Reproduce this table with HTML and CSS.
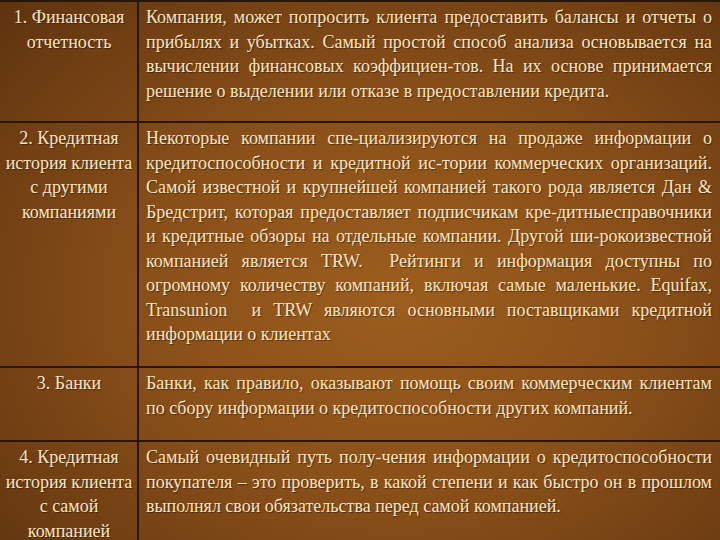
FILE: index.html
```html
<!DOCTYPE html>
<html lang="ru">
<head>
<meta charset="utf-8">
<link rel="stylesheet" href="styles.css">
</head>
<body>
<table class="grid">
  <tr class="r1">
    <td class="head"><div>1. Финансовая</div><div>отчетность</div></td>
    <td class="body">
      <div class="j">Компания, может попросить клиента предоставить балансы и отчеты о</div>
      <div class="j">прибылях и убытках. Самый простой способ анализа основывается на</div>
      <div class="j">вычислении финансовых коэффициен-тов. На их основе принимается</div>
      <div>решение о выделении или отказе в предоставлении кредита.</div>
    </td>
  </tr>
  <tr class="r2">
    <td class="head"><div>2. Кредитная</div><div>история клиента</div><div>с другими</div><div>компаниями</div></td>
    <td class="body">
      <div class="j">Некоторые компании спе-циализируются на продаже информации о</div>
      <div class="j">кредитоспособности и кредитной ис-тории коммерческих организаций.</div>
      <div class="j">Самой известной и крупнейшей компанией такого рода является Дан &amp;</div>
      <div class="j">Бредстрит, которая предоставляет подписчикам кре-дитныесправочники</div>
      <div class="j">и кредитные обзоры на отдельные компании. Другой ши-рокоизвестной</div>
      <div class="j">компанией является TRW.&nbsp; Рейтинги и информация доступны по</div>
      <div class="j">огромному количеству компаний, включая самые маленькие. Equifax,</div>
      <div class="j">Transunion&nbsp; и TRW являются основными поставщиками кредитной</div>
      <div>информации о клиентах</div>
    </td>
  </tr>
  <tr class="r3">
    <td class="head"><div>3. Банки</div></td>
    <td class="body">
      <div class="j">Банки, как правило, оказывают помощь своим коммерческим клиентам</div>
      <div>по сбору информации о кредитоспособности других компаний.</div>
    </td>
  </tr>
  <tr class="r4">
    <td class="head"><div>4. Кредитная</div><div>история клиента</div><div>с самой</div><div>компанией</div></td>
    <td class="body">
      <div class="j">Самый очевидный путь полу-чения информации о кредитоспособности</div>
      <div class="j">покупателя – это проверить, в какой степени и как быстро он в прошлом</div>
      <div>выполнял свои обязательства перед самой компанией.</div>
    </td>
  </tr>
</table>
</body>
</html>
```

FILE: styles.css
```css
html, body {
  margin: 0;
  padding: 0;
  width: 720px;
  height: 540px;
  overflow: hidden;
}
body {
  background: radial-gradient(ellipse 75% 80% at 55% 55%, #9c5e1e 0%, #8a5019 45%, #6f3e13 80%, #5e330f 100%);
  font-family: "Liberation Serif", Tinos, "Times New Roman", "DejaVu Serif", serif;
  font-size: 18px;
  line-height: 24.5px;
  color: #f5e5c5;
  text-shadow: 1px 1px 1px rgba(30, 12, 0, 0.5);
}
.grid {
  width: 720px;
  border-collapse: collapse;
  table-layout: fixed;
  border-top: 2px solid #2a1606;
}
.grid td {
  vertical-align: top;
  padding: 3px 7px 0 7px;
  border-bottom: 2px solid #2a1606;
}
.grid td.head {
  width: 134px;
  padding: 3px 1px 0 2px;
  text-align: center;
  border-right: 2px solid #2a1606;
  white-space: nowrap;
}
.grid td.body {
  padding-left: 7px;
  padding-right: 8px;
}
.j {
  text-align: justify;
  text-align-last: justify;
}
.body div {
  white-space: nowrap;
}
.r1 { height: 121px; }
.r2 { height: 245px; }
.r3 { height: 74px; }
.r4 { height: 110px; }
.r4 td { border-bottom: none; }
```
